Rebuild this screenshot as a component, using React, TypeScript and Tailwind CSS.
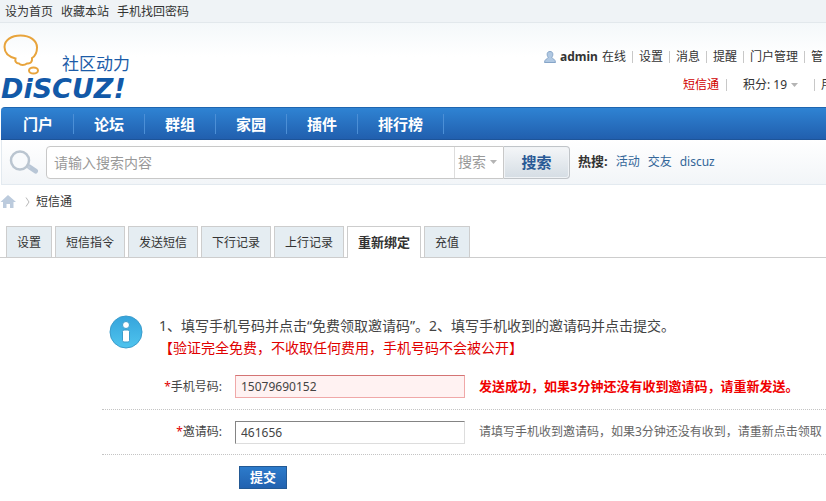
import React from "react";

const navItems = ["门户", "论坛", "群组", "家园", "插件", "排行榜"];
const tabs = ["设置", "短信指令", "发送短信", "下行记录", "上行记录", "重新绑定", "充值"];
const activeTab = "重新绑定";
const hotWords = ["活动", "交友", "discuz"];

function Logo() {
  return (
    <svg width="136" height="72" viewBox="0 0 136 72" role="img" aria-label="Discuz! 社区动力">
      <g fill="none" stroke="#e8a43c" strokeWidth="2">
        <path d="M15.500 24.500 C8 22.500 4.500 18 4.500 13 C4.500 6 11.500 1.500 20.500 1.500 C30 1.500 37 6.500 37 13.500 C37 19 34.500 22.500 32 24 C32.500 28 30.500 30 27 29.500 C24.500 31.500 20.500 31.500 19 29.500 C16 29.500 14.800 27 15.500 24.500 Z" />
        <ellipse cx="33.500" cy="36.500" rx="4.500" ry="3" />
      </g>
      <text x="62" y="36" fontSize="17" fill="#1c5ca8" fontFamily="'Noto Sans CJK SC', sans-serif">社区动力</text>
      <text x="1" y="64" fontSize="27" fontWeight="700" fontStyle="italic" fill="#1259a8" fontFamily="'DejaVu Sans', sans-serif">DiSCUZ!</text>
    </svg>
  );
}

function Separator() {
  return <span className="h-3 w-px shrink-0 bg-[#c8c8c8]" />;
}

function Caret() {
  return (
    <svg width="7" height="4" viewBox="0 0 7 4" aria-hidden="true">
      <path d="M0 0h7L3.500 4z" fill="#b4b4b4" />
    </svg>
  );
}

function UserPanel() {
  return (
    <div className="w-[282px] shrink-0 overflow-hidden whitespace-nowrap pt-6">
      <div className="flex h-5 items-center gap-[6px]">
        <div className="flex items-center gap-1">
          <svg width="12" height="12" viewBox="0 0 12 12" aria-hidden="true">
            <path d="M6 .5C4 .5 3 1.700 3.200 3.800 3.300 5.200 4 6 4.200 6.500 4 7.700 .5 8 .5 11.500h11C11.500 8 8 7.700 7.800 6.500 8 6 8.700 5.200 8.800 3.800 9 1.700 8 .5 6 .5z" fill="#b0c8e2" stroke="#86a5c8" strokeWidth="1" />
          </svg>
          <a href="#admin" className="font-bold">admin</a>
          <span>在线</span>
        </div>
        <Separator />
        <a href="#settings">设置</a>
        <Separator />
        <a href="#messages">消息</a>
        <Separator />
        <a href="#notices">提醒</a>
        <Separator />
        <a href="#portal">门户管理</a>
        <Separator />
        <a href="#manage">管</a>
      </div>
      <div className="mt-2 flex h-5 items-center pl-[139px]">
        <a href="#sms" className="mr-[7px] text-[#d00000]">短信通</a>
        <Separator />
        <a href="#credits" className="mx-4 flex items-center gap-1">
          积分: 19 <Caret />
        </a>
        <Separator />
        <a href="#group" className="ml-[6px]">用</a>
      </div>
    </div>
  );
}

function SearchBar() {
  return (
    <form className="ml-px flex h-[45px] items-center overflow-hidden border-b border-l border-[#e3eaf0] bg-linear-to-b from-white to-[#f2f5f8]" onSubmit={(e) => e.preventDefault()}>
      <svg className="mx-[7px] shrink-0" width="30" height="25" viewBox="0 0 30 25" aria-hidden="true">
        <path d="M20.500 17l6 4" stroke="#b8c6d6" strokeWidth="5" strokeLinecap="round" />
        <path d="M17 15l4 3" stroke="#c3cedb" strokeWidth="2.500" />
        <circle cx="11" cy="10.500" r="9" fill="#f8fafc" stroke="#bac5d0" strokeWidth="2.500" />
      </svg>
      <div className="flex h-[33px] w-[458px] shrink-0 items-center rounded-l-sm border border-[#c8c8c8] bg-white">
        <input aria-label="搜索内容" placeholder="请输入搜索内容" className="h-full min-w-0 flex-1 px-[7px] text-sm outline-none placeholder:text-[#999999]" />
        <button type="button" className="flex h-full w-[49px] items-center gap-1 border-l border-[#dddddd] pl-[3px] text-sm text-[#999999]">
          搜索 <Caret />
        </button>
      </div>
      <button type="submit" className="h-[33px] w-[66px] shrink-0 rounded-r-sm border border-l-0 border-[#c0c4c8] bg-linear-to-b from-[#f4f6f8] to-[#d5dde4] text-[15px] font-bold text-[#2a5a96] shadow-[inset_0_0_0_1px_#f0f3f6]">
        搜索
      </button>
      <div className="ml-2 flex shrink-0 items-center gap-2 whitespace-nowrap text-[#336699]">
        <strong className="text-[13px] text-[#333333]">热搜:</strong>
        {hotWords.map((w) => (
          <a key={w} href={"#" + w}>{w}</a>
        ))}
      </div>
    </form>
  );
}

function InfoIcon() {
  return (
    <svg className="shrink-0" width="34" height="34" viewBox="0 0 34 34" aria-hidden="true">
      <defs>
        <linearGradient id="info" x1="0" y1="0" x2="0" y2="1">
          <stop offset="0" stopColor="#35a4dc" />
          <stop offset="1" stopColor="#4fc4ee" />
        </linearGradient>
      </defs>
      <circle cx="17" cy="17" r="16" fill="url(#info)" stroke="#3a9ccc" strokeWidth="1" />
      <circle cx="17" cy="10" r="3.500" fill="#fff" stroke="#3b9ccb" />
      <rect x="13.500" y="15" width="7" height="12" rx="1.500" fill="#fff" stroke="#3b9ccb" />
    </svg>
  );
}

export default function App() {
  return (
    <div className="min-h-screen overflow-hidden bg-white font-['Noto_Sans','Noto_Sans_CJK_SC',sans-serif] text-xs text-[#333333]">
      <div className="flex h-[23px] items-center gap-2 border-b border-[#e2e8ec] bg-[#eff3f6] pl-[5px] pt-px">
        <a href="#home">设为首页</a>
        <a href="#favorite">收藏本站</a>
        <a href="#recover">手机找回密码</a>
      </div>

      <header className="flex h-[84px] justify-between bg-linear-to-b from-[#f4f8fa] to-white to-40%">
        <a href="#index" className="shrink-0 pt-[11px]"><Logo /></a>
        <UserPanel />
      </header>

      <nav className="ml-px flex h-[33px] items-center rounded-tl border-y border-t-[#1f66b0] border-b-[#1d5499] bg-linear-to-b from-[#2f83d3] to-[#215fae] text-[15px] font-bold text-white">
        {navItems.map((item) => (
          <a key={item} href={"#" + item} className="flex h-5 items-center border-r border-[#4c8fd6] px-5 first:pl-[22px]">
            {item}
          </a>
        ))}
      </nav>

      <SearchBar />

      <div className="flex h-[34px] items-center">
        <a href="#index" aria-label="首页">
          <svg width="16" height="14" viewBox="0 0 16 14" aria-hidden="true">
            <path d="M8 0l8 7h-2.500v6H10V9H6.500v4H3V7H.5z" fill="#bccbdd" />
          </svg>
        </a>
        <svg className="ml-[9px] mr-[6px]" width="5" height="10" viewBox="0 0 5 10" aria-hidden="true">
          <path d="M1 .5L4 5 1 9.500" fill="none" stroke="#b8b8b8" />
        </svg>
        <a href="#sms">短信通</a>
      </div>

      <div className="mt-[7px] flex items-end gap-[3px] border-b border-[#cdcdcd] pl-[6px]">
        {tabs.map((tab) => (
          <a
            key={tab}
            href={"#" + tab}
            className={
              tab === activeTab
                ? "-mb-px flex h-8 items-center border border-b-0 border-[#cdcdcd] bg-white px-[10px] text-[13px] font-bold"
                : "flex h-[31px] items-center border border-b-0 border-[#cdcdcd] bg-[#e5edf2] px-[10px] pt-px"
            }
          >
            {tab}
          </a>
        ))}
      </div>

      <main className="ml-[102px] pt-[57px]">
        <div className="flex items-start gap-4 pl-[7px] text-sm leading-[22px]">
          <InfoIcon />
          <div className="whitespace-nowrap text-[#444444]">
            <p>1、填写手机号码并点击“免费领取邀请码”。2、填写手机收到的邀请码并点击提交。</p>
            <p className="text-[#e00000]">【验证完全免费，不收取任何费用，手机号码不会被公开】</p>
          </div>
        </div>
        <form onSubmit={(e) => e.preventDefault()} className="mt-[5px]">
          <div className="flex h-[46px] items-center border-b border-dotted border-[#c4c4c4] whitespace-nowrap">
            <label htmlFor="phone" className="w-[120px] shrink-0 text-right text-[#444444]"><span className="text-[#e00000]">*</span>手机号码:</label>
            <input id="phone" defaultValue="15079690152" className="ml-[13px] h-[23px] w-[230px] shrink-0 border border-[#f0a8a8] border-t-[#d47474] bg-[#fff2f2] px-[5px] text-[#444444] outline-none" />
            <strong className="ml-[14px] text-[13px] text-[#f00000]">发送成功，如果3分钟还没有收到邀请码，请重新发送。</strong>
          </div>
          <div className="flex h-[45px] items-center border-b border-dotted border-[#c4c4c4] whitespace-nowrap">
            <label htmlFor="invite" className="w-[120px] shrink-0 text-right text-[#444444]"><span className="text-[#e00000]">*</span>邀请码:</label>
            <input id="invite" defaultValue="461656" className="ml-[13px] h-[23px] w-[230px] shrink-0 border border-[#dddddd] border-l-[#848484] border-t-[#848484] bg-white px-[5px] text-[#444444] outline-none" />
            <span className="ml-[14px] text-[#666666]">请填写手机收到邀请码，如果3分钟还没有收到，请重新点击领取</span>
          </div>
          <button type="submit" className="ml-[137px] mt-[11px] h-[23px] w-12 border border-[#235994] bg-linear-to-b from-[#2c7bcb] to-[#2262b0] text-[13px] font-bold text-white">
            提交
          </button>
        </form>
      </main>
    </div>
  );
}
